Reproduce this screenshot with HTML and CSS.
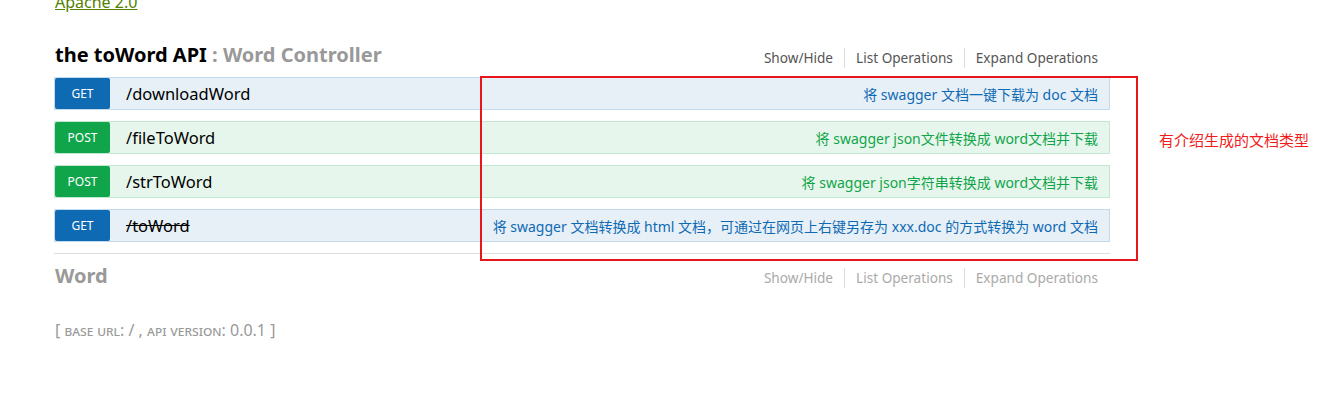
FILE: index.html
```
<!DOCTYPE html>
<html lang="zh">
<head>
<meta charset="utf-8">
<title>the toWord API</title>
<link rel="stylesheet" href="styles.css">
</head>
<body>
<div class="page">
  <div class="info"><a class="license" href="#">Apache 2.0</a></div>

  <section class="resource">
    <div class="res-head">
      <h2><a href="#" class="api-name">the toWord API</a> : Word Controller</h2>
      <ul class="options">
        <li><a href="#">Show/Hide</a></li>
        <li><a href="#">List Operations</a></li>
        <li class="last"><a href="#">Expand Operations</a></li>
      </ul>
    </div>
    <ul class="ops">
      <li class="op get">
        <span class="method">GET</span>
        <span class="path">/downloadWord</span>
        <span class="desc">将 swagger 文档一键下载为 doc 文档</span>
      </li>
      <li class="op post">
        <span class="method">POST</span>
        <span class="path">/fileToWord</span>
        <span class="desc">将 swagger json文件转换成 word文档并下载</span>
      </li>
      <li class="op post">
        <span class="method">POST</span>
        <span class="path">/strToWord</span>
        <span class="desc">将 swagger json字符串转换成 word文档并下载</span>
      </li>
      <li class="op get">
        <span class="method">GET</span>
        <span class="path deprecated">/toWord</span>
        <span class="desc">将 swagger 文档转换成 html 文档，可通过在网页上右键另存为 xxx.doc 的方式转换为 word 文档</span>
      </li>
    </ul>
  </section>

  <section class="resource closed">
    <div class="res-head">
      <h2><a href="#" class="api-name">Word</a></h2>
      <ul class="options">
        <li><a href="#">Show/Hide</a></li>
        <li><a href="#">List Operations</a></li>
        <li class="last"><a href="#">Expand Operations</a></li>
      </ul>
    </div>
  </section>

  <div class="footer">[ <span class="sc">base url</span>: / , <span class="sc">api version</span>: 0.0.1 ]</div>
</div>

<div class="annot-box"></div>
<div class="annot-text">有介绍生成的文档类型</div>
</body>
</html>
```

FILE: styles.css
```
* { box-sizing: border-box; }

html, body {
  margin: 0;
  padding: 0;
  background: #fff;
}

body {
  font-family: "Noto Sans", "Open Sans", "Noto Sans CJK SC", sans-serif;
  color: #000;
  position: relative;
  height: 405px;
  overflow: hidden;
}

.page {
  width: 1110px;
  padding-left: 54px;
}

.info {
  height: 12px;
  padding-left: 1px;
  font-size: 16px;
  line-height: 4px;
}

.license {
  color: #547f00;
  text-decoration: underline;
}

.res-head {
  display: flex;
  align-items: center;
  justify-content: space-between;
  height: 30px;
  margin-top: 29px;
  padding-right: 12px;
}

.res-head h2 {
  margin: 0 0 3px 1px;
  font-size: 20px;
  font-weight: 700;
  line-height: 28px;
  color: #999;
}

.api-name {
  color: #000;
  text-decoration: none;
}

.options {
  display: flex;
  list-style: none;
  margin: 4px 0 0 0;
  padding: 0;
}

.options li {
  border-right: 1px solid #ddd;
  padding: 0 11px 0 11px;
  font-size: 13.6px;
  line-height: 20px;
}

.options li.last {
  border-right: none;
  padding-right: 0;
}

.options a {
  color: #555;
  text-decoration: none;
}

.ops {
  list-style: none;
  margin: 6px 0 0 0;
  padding: 0 0 11px 0;
  border-bottom: 1px solid #ddd;
  display: flex;
  flex-direction: column;
  gap: 11px;
}

.op {
  display: flex;
  align-items: center;
  height: 33px;
  border: 1px solid;
}

.op.get {
  background: #e7f0f7;
  border-color: #c3d9ec;
}

.op.post {
  background: #e7f6ec;
  border-color: #c3e8d1;
}

.method {
  flex: 0 0 55px;
  height: 31px;
  display: flex;
  align-items: center;
  justify-content: center;
  color: #fff;
  font-size: 12px;
  border-radius: 2px;
}

.get .method { background: #0f6ab4; }
.post .method { background: #10a54a; }

.path {
  margin-left: 16px;
  font-size: 16.5px;
  color: #000;
}

.path.deprecated {
  text-decoration: line-through;
}

.desc {
  margin-left: auto;
  padding-right: 11px;
  font-size: 14px;
}

.get .desc { color: #0f6ab4; }
.post .desc { color: #10a54a; }

.closed .res-head {
  margin-top: 7px;
}

.closed .res-head h2 {
  margin-bottom: 1px;
}

.closed .api-name {
  color: #999;
}

.closed .options a {
  color: #aaa;
}

.footer {
  margin-top: 28px;
  margin-left: 1px;
  font-size: 16px;
  color: #999;
  line-height: 22px;
}

.sc {
  font-variant: small-caps;
  font-size: 14.8px;
}

.annot-box {
  position: absolute;
  left: 480px;
  top: 76px;
  width: 658px;
  height: 185px;
  border: 2px solid #e8151b;
}

.annot-text {
  position: absolute;
  left: 1159px;
  top: 130px;
  font-family: "Noto Sans CJK SC", sans-serif;
  font-size: 15px;
  line-height: 20px;
  color: #f01c1c;
}
```
